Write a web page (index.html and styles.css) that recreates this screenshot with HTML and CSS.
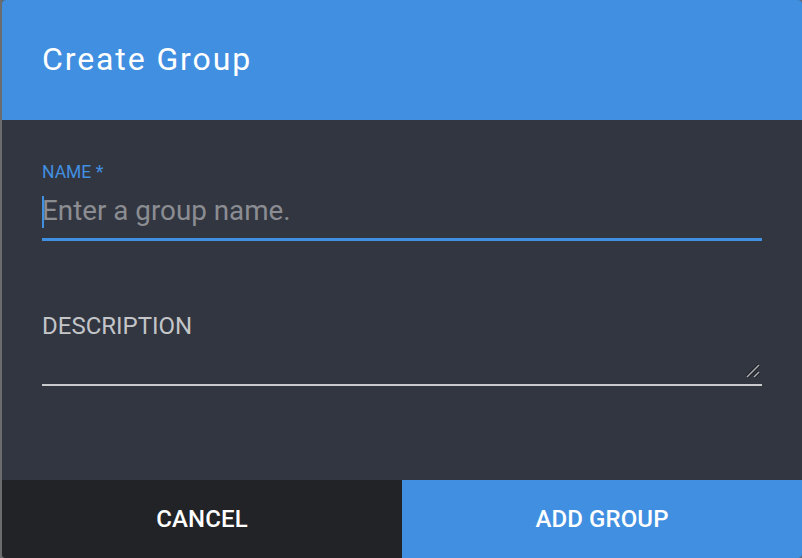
FILE: index.html
```html
<html>
<head>
<meta charset="utf-8">
<link rel="stylesheet" href="styles.css">
</head>
<body>
<div class="dialog">
	<div class="dialog_title">Create Group</div>
	<div class="dialog_body">
		<div class="field">
			<label class="field_label active" for="group_name">NAME <span class="req">*</span></label>
			<div class="input_wrap">
				<input id="group_name" class="field_input" type="text" placeholder="Enter a group name.">
				<span class="caret"></span>
			</div>
		</div>
		<div class="field field_desc">
			<label class="field_label" for="group_desc">DESCRIPTION</label>
			<div class="input_wrap">
				<textarea id="group_desc" class="field_text"></textarea>
				<svg class="grip" width="16" height="16" viewBox="0 0 16 16">
					<path d="M2 15 L14 3" stroke="#1a1c20" stroke-width="3.2"/>
					<path d="M9 15 L14 10" stroke="#1a1c20" stroke-width="3.2"/>
					<path d="M2 15 L14 3" stroke="#a9abaf" stroke-width="1.6"/>
					<path d="M9 15 L14 10" stroke="#a9abaf" stroke-width="1.6"/>
				</svg>
			</div>
		</div>
	</div>
	<div class="dialog_actions">
		<button class="btn btn_cancel">CANCEL</button>
		<button class="btn btn_add">ADD GROUP</button>
	</div>
</div>
</body>
</html>
```

FILE: styles.css
```css
html, body {
	margin: 0;
	height: 100%;
}
body {
	background-color: #6b6c6e;
	font-family: Roboto, 'Liberation Sans', sans-serif;
	padding-left: 2px;
	overflow: hidden;
}

.dialog {
	width: 800px;
	height: 558px;
	border-radius: 4px;
	overflow: hidden;
	display: flex;
	flex-direction: column;
	background-color: #323640;
}
.dialog_title {
	height: 120px;
	flex: none;
	display: flex;
	align-items: center;
	padding-left: 40px;
	background-color: #418fe0;
	color: #ffffff;
	font-size: 32px;
	letter-spacing: 1.9px;
	box-sizing: border-box;
	padding-bottom: 2px;
}

.dialog_body {
	flex: 1;
	padding: 42px 40px 0 40px;
}
.field {
	display: flex;
	flex-direction: column;
}
.field_label {
	font-size: 17.5px;
	line-height: 20px;
	color: #c3c5c9;
}
.field_label.active {
	color: #418fe0;
}
.req {
	font-size: 18px;
}
.input_wrap {
	position: relative;
	display: flex;
	flex-direction: column;
}
.field_input {
	margin-top: 12px;
	padding: 0 0 12px 0;
	border: none;
	border-bottom: 3px solid #418fe0;
	background: transparent;
	outline: none;
	font-family: Roboto, 'Liberation Sans', sans-serif;
	font-size: 27.8px;
	line-height: 32px;
	height: 47px;
	color: #ffffff;
}
.field_input::placeholder {
	color: #8b8d92;
}
.caret {
	position: absolute;
	left: 0;
	top: 14px;
	width: 2px;
	height: 32px;
	background-color: #418fe0;
}

.field_desc {
	margin-top: 71px;
}
.field_desc .field_label {
	font-size: 24px;
	line-height: 28px;
}
.field_text {
	height: 46px;
	box-sizing: border-box;
	border: none;
	border-bottom: 2px solid #c9cacd;
	background: transparent;
	outline: none;
	resize: none;
	color: #ffffff;
}
.grip {
	position: absolute;
	right: 1px;
	bottom: 8px;
}

.dialog_actions {
	height: 78px;
	flex: none;
	display: flex;
}
.btn {
	flex: 1;
	border: none;
	color: #ffffff;
	font-family: Roboto, 'Liberation Sans', sans-serif;
	font-size: 24px;
	font-weight: 500;
	letter-spacing: 0.1px;
}
.btn_cancel {
	background-color: #222327;
}
.btn_add {
	background-color: #418fe0;
}
```
